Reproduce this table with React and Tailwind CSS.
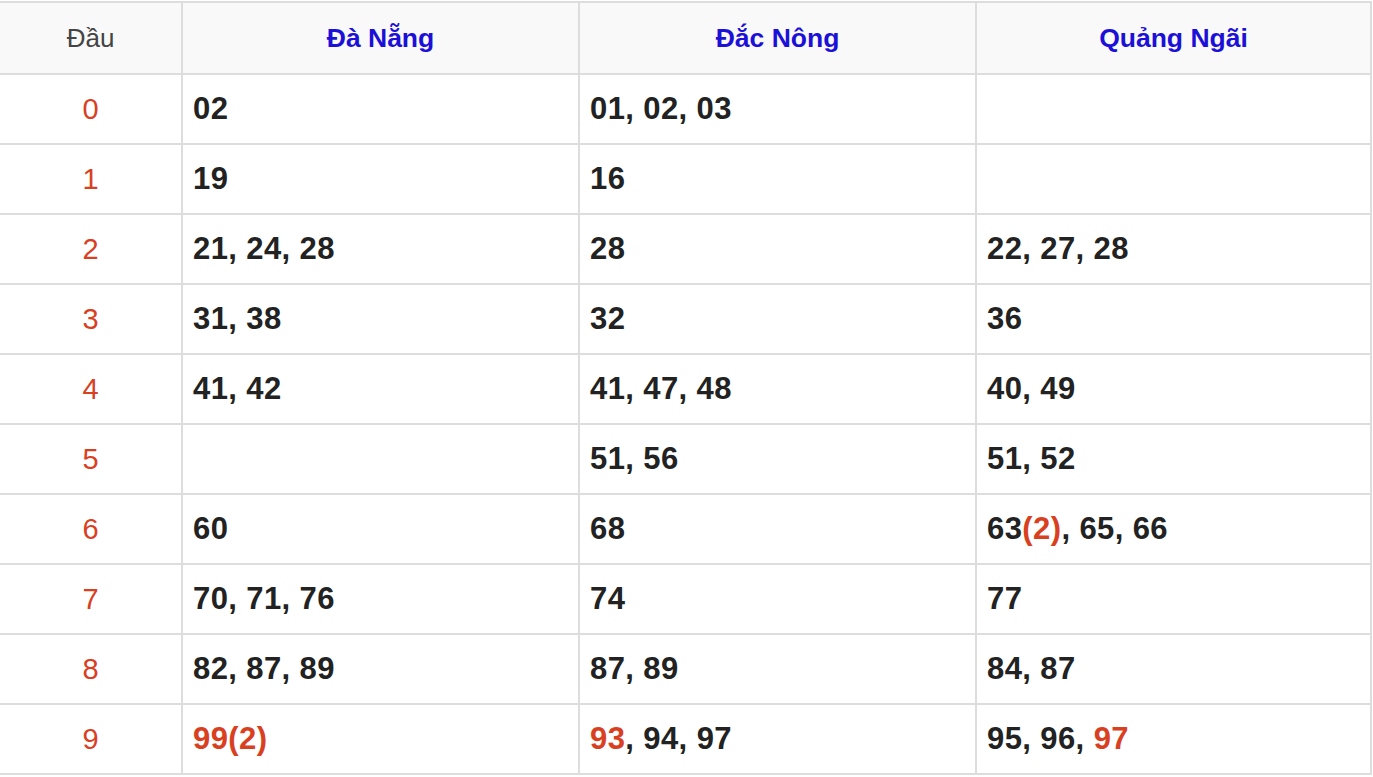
const provinces = ['Đà Nẵng', 'Đắc Nông', 'Quảng Ngãi']

// each entry: [text, highlighted]
const rows = [
  [[['02']], [['01, 02, 03']], []],
  [[['19']], [['16']], []],
  [[['21, 24, 28']], [['28']], [['22, 27, 28']]],
  [[['31, 38']], [['32']], [['36']]],
  [[['41, 42']], [['41, 47, 48']], [['40, 49']]],
  [[], [['51, 56']], [['51, 52']]],
  [[['60']], [['68']], [['63'], ['(2)', true], [', 65, 66']]],
  [[['70, 71, 76']], [['74']], [['77']]],
  [[['82, 87, 89']], [['87, 89']], [['84, 87']]],
  [[['99(2)', true]], [['93', true], [', 94, 97']], [['95, 96, '], ['97', true]]],
]

const widths = ['w-[183px]', 'w-[397px]', 'w-[397px]', 'w-[395px]']

export default function App() {
  return (
    <div className="bg-white min-h-screen pt-px overflow-hidden" style={{ fontFamily: '"Liberation Sans", Arial, sans-serif' }}>
      <div className="ml-[-2px] w-[1374px] border-t-2 border-l-2 border-[#dddddd]">
        <div className="flex h-[72px] bg-[#f9f9f9]">
          <div className={`${widths[0]} shrink-0 flex items-center justify-center pt-[1px] border-r-2 border-b-2 border-[#dddddd] text-[26px] text-[#444444]`}>
            Đầu
          </div>
          {provinces.map((p, i) => (
            <div
              key={p}
              className={`${widths[i + 1]} shrink-0 flex items-center justify-center pt-[1px] border-r-2 border-b-2 border-[#dddddd] text-[26.5px] font-bold text-[#1c10d8]`}
            >
              {p}
            </div>
          ))}
        </div>
        {rows.map((row, r) => (
          <div key={r} className="flex h-[70px]">
            <div className={`${widths[0]} shrink-0 flex items-center justify-center pt-[1px] border-r-2 border-b-2 border-[#dddddd] text-[29px] text-[#d9401f]`}>
              {r}
            </div>
            {row.map((cell, c) => (
              <div
                key={c}
                className={`${widths[c + 1]} shrink-0 flex items-center pl-[10px] pt-[1px] border-r-2 border-b-2 border-[#dddddd] text-[31px] tracking-[0.4px] font-bold text-[#222222]`}
              >
                <span>
                  {cell.map(([t, hot], k) => (
                    <span key={k} className={hot ? 'text-[#d9401f]' : ''}>
                      {t}
                    </span>
                  ))}
                </span>
              </div>
            ))}
          </div>
        ))}
      </div>
    </div>
  )
}
